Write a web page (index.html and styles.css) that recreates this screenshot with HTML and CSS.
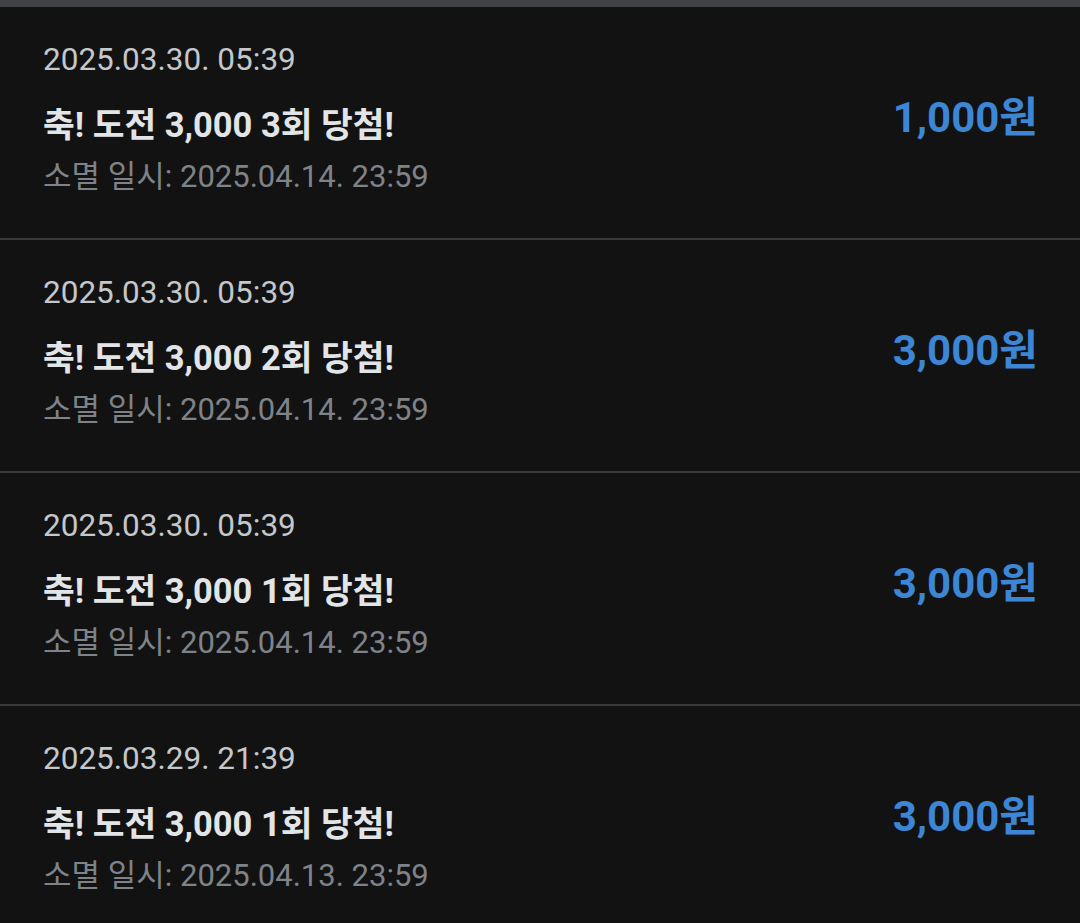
FILE: index.html
```html
<!DOCTYPE html>
<html lang="ko">
<head>
  <meta charset="UTF-8" />
  <meta name="viewport" content="width=device-width, initial-scale=1.0" />
  <title>당첨 내역</title>
  <link rel="stylesheet" href="styles.css">
</head>
<body>

<div class="top-bar"></div>

<ul class="history">
  <li class="entry">
    <div class="entry-info">
      <p class="entry-date">2025.03.30. 05:39</p>
      <p class="entry-title">축! 도전 3,000 3회 당첨!</p>
      <p class="entry-expire">소멸 일시: 2025.04.14. 23:59</p>
    </div>
    <span class="entry-amount">1,000원</span>
  </li>
  <li class="entry">
    <div class="entry-info">
      <p class="entry-date">2025.03.30. 05:39</p>
      <p class="entry-title">축! 도전 3,000 2회 당첨!</p>
      <p class="entry-expire">소멸 일시: 2025.04.14. 23:59</p>
    </div>
    <span class="entry-amount">3,000원</span>
  </li>
  <li class="entry">
    <div class="entry-info">
      <p class="entry-date">2025.03.30. 05:39</p>
      <p class="entry-title">축! 도전 3,000 1회 당첨!</p>
      <p class="entry-expire">소멸 일시: 2025.04.14. 23:59</p>
    </div>
    <span class="entry-amount">3,000원</span>
  </li>
  <li class="entry">
    <div class="entry-info">
      <p class="entry-date">2025.03.29. 21:39</p>
      <p class="entry-title">축! 도전 3,000 1회 당첨!</p>
      <p class="entry-expire">소멸 일시: 2025.04.13. 23:59</p>
    </div>
    <span class="entry-amount">3,000원</span>
  </li>
</ul>

</body>
</html>
```

FILE: styles.css
```css
* {
  margin: 0;
  padding: 0;
  box-sizing: border-box;
}

html, body {
  height: 100%;
  background: #121212;
  font-family: Roboto, "Noto Sans CJK KR", sans-serif;
  overflow: hidden;
}

.top-bar {
  height: 7px;
  background: #414245;
}

/* History list */
.history {
  list-style: none;
}

.entry {
  display: flex;
  align-items: center;
  justify-content: space-between;
  padding: 31px 42px 39px 43px;
  border-bottom: 2px solid #3a3a3b;
}

.entry-date {
  font-size: 31.5px;
  line-height: 44px;
  color: #c4c7cb;
}

.entry-title {
  margin-top: 19px;
  font-size: 34.5px;
  line-height: 48px;
  font-weight: 700;
  color: #e2e5e7;
}

.entry-expire {
  margin-top: 6px;
  font-size: 31px;
  line-height: 44px;
  color: #7e8389;
}

.entry-amount {
  margin-bottom: 2px;
  font-size: 42px;
  line-height: 50px;
  font-weight: 700;
  color: #3d85d5;
}
```
